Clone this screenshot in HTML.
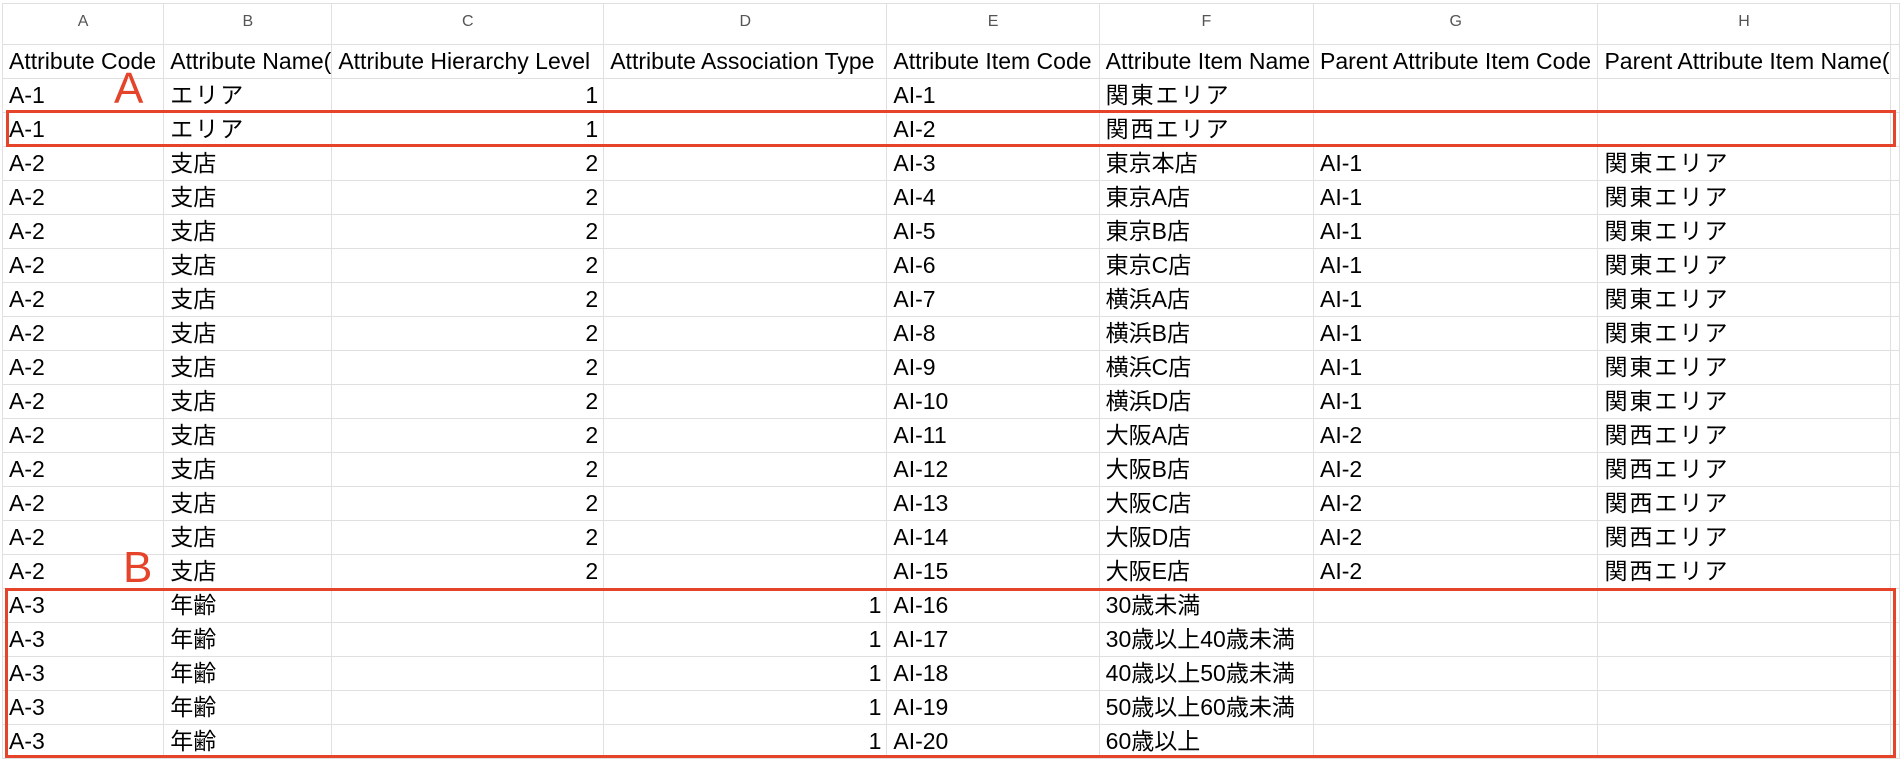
<!DOCTYPE html>
<html><head><meta charset="utf-8"><style>
body{margin:0;width:1900px;height:766px;background:#fff;overflow:hidden;position:relative;font-family:"Liberation Sans","Noto Sans CJK JP",sans-serif;}
table{position:absolute;left:2px;top:3px;border-collapse:collapse;table-layout:fixed;}
td{border:1.5px solid #e0e0e0;padding:2px 0 0 6px;white-space:nowrap;overflow:hidden;font-size:23px;color:#000;line-height:29px;box-sizing:border-box;height:34px;vertical-align:top;}
tr.l td{height:41px;line-height:36px;text-align:center;color:#555;font-size:16px;font-family:"Liberation Sans",sans-serif;padding:0;background:#fff;}
td.n{text-align:right;padding:2px 5px 0 0;}
.j{letter-spacing:2px;}
.box{position:absolute;border:3px solid #e6432b;box-sizing:border-box;}
.lab{position:absolute;color:#e6432b;font-size:44px;font-family:"Liberation Sans",sans-serif;font-weight:300;}
</style></head><body>
<table>
<colgroup><col style="width:163px"><col style="width:165px"><col style="width:275px"><col style="width:286px"><col style="width:214px"><col style="width:215px"><col style="width:286px"><col style="width:288px"><col style="width:10px"></colgroup>
<tr class="l"><td>A</td><td>B</td><td>C</td><td>D</td><td>E</td><td>F</td><td>G</td><td>H</td><td></td></tr>
<tr><td>Attribute Code</td><td>Attribute Name(</td><td>Attribute Hierarchy Level</td><td>Attribute Association Type</td><td>Attribute Item Code</td><td>Attribute Item Name</td><td>Parent Attribute Item Code</td><td>Parent Attribute Item Name(</td><td></td></tr>
<tr><td>A-1</td><td class="j">エリア</td><td class="n">1</td><td></td><td>AI-1</td><td class="j">関東エリア</td><td></td><td></td><td></td></tr>
<tr><td>A-1</td><td class="j">エリア</td><td class="n">1</td><td></td><td>AI-2</td><td class="j">関西エリア</td><td></td><td></td><td></td></tr>
<tr><td>A-2</td><td>支店</td><td class="n">2</td><td></td><td>AI-3</td><td>東京本店</td><td>AI-1</td><td class="j">関東エリア</td><td></td></tr>
<tr><td>A-2</td><td>支店</td><td class="n">2</td><td></td><td>AI-4</td><td>東京A店</td><td>AI-1</td><td class="j">関東エリア</td><td></td></tr>
<tr><td>A-2</td><td>支店</td><td class="n">2</td><td></td><td>AI-5</td><td>東京B店</td><td>AI-1</td><td class="j">関東エリア</td><td></td></tr>
<tr><td>A-2</td><td>支店</td><td class="n">2</td><td></td><td>AI-6</td><td>東京C店</td><td>AI-1</td><td class="j">関東エリア</td><td></td></tr>
<tr><td>A-2</td><td>支店</td><td class="n">2</td><td></td><td>AI-7</td><td>横浜A店</td><td>AI-1</td><td class="j">関東エリア</td><td></td></tr>
<tr><td>A-2</td><td>支店</td><td class="n">2</td><td></td><td>AI-8</td><td>横浜B店</td><td>AI-1</td><td class="j">関東エリア</td><td></td></tr>
<tr><td>A-2</td><td>支店</td><td class="n">2</td><td></td><td>AI-9</td><td>横浜C店</td><td>AI-1</td><td class="j">関東エリア</td><td></td></tr>
<tr><td>A-2</td><td>支店</td><td class="n">2</td><td></td><td>AI-10</td><td>横浜D店</td><td>AI-1</td><td class="j">関東エリア</td><td></td></tr>
<tr><td>A-2</td><td>支店</td><td class="n">2</td><td></td><td>AI-11</td><td>大阪A店</td><td>AI-2</td><td class="j">関西エリア</td><td></td></tr>
<tr><td>A-2</td><td>支店</td><td class="n">2</td><td></td><td>AI-12</td><td>大阪B店</td><td>AI-2</td><td class="j">関西エリア</td><td></td></tr>
<tr><td>A-2</td><td>支店</td><td class="n">2</td><td></td><td>AI-13</td><td>大阪C店</td><td>AI-2</td><td class="j">関西エリア</td><td></td></tr>
<tr><td>A-2</td><td>支店</td><td class="n">2</td><td></td><td>AI-14</td><td>大阪D店</td><td>AI-2</td><td class="j">関西エリア</td><td></td></tr>
<tr><td>A-2</td><td>支店</td><td class="n">2</td><td></td><td>AI-15</td><td>大阪E店</td><td>AI-2</td><td class="j">関西エリア</td><td></td></tr>
<tr><td>A-3</td><td>年齢</td><td></td><td class="n">1</td><td>AI-16</td><td>30歳未満</td><td></td><td></td><td></td></tr>
<tr><td>A-3</td><td>年齢</td><td></td><td class="n">1</td><td>AI-17</td><td>30歳以上40歳未満</td><td></td><td></td><td></td></tr>
<tr><td>A-3</td><td>年齢</td><td></td><td class="n">1</td><td>AI-18</td><td>40歳以上50歳未満</td><td></td><td></td><td></td></tr>
<tr><td>A-3</td><td>年齢</td><td></td><td class="n">1</td><td>AI-19</td><td>50歳以上60歳未満</td><td></td><td></td><td></td></tr>
<tr><td>A-3</td><td>年齢</td><td></td><td class="n">1</td><td>AI-20</td><td>60歳以上</td><td></td><td></td><td></td></tr>
</table>
<div class="box" style="left:6px;top:110px;width:1890px;height:37px"></div>
<div class="box" style="left:5px;top:588px;width:1891px;height:170px"></div>
<div class="lab" style="left:114px;top:64px">A</div>
<div class="lab" style="left:123px;top:543px">B</div>
</body></html>
